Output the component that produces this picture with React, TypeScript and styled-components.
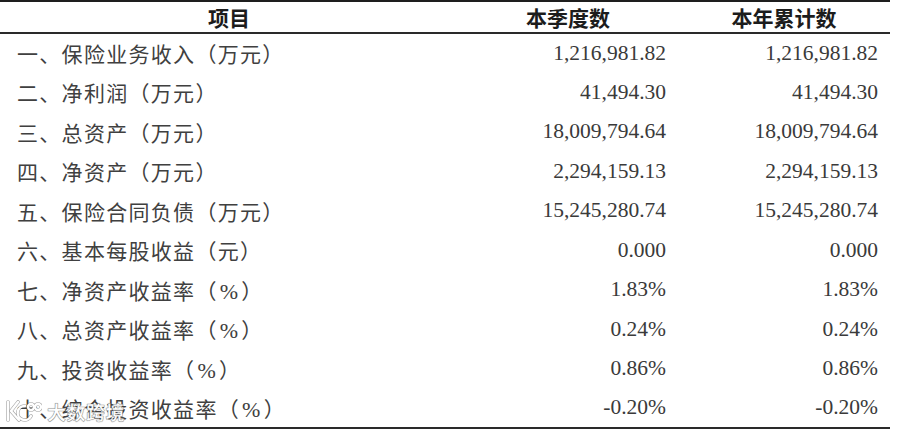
import React from "react";
import styled, { createGlobalStyle } from "styled-components";

const GlobalStyle = createGlobalStyle`
  html, body {
    margin: 0;
    padding: 0;
    background: #ffffff;
  }
`;

type Row = {
  label: string;
  quarter: string;
  year: string;
};

const rows: Row[] = [
  { label: "一、保险业务收入（万元）", quarter: "1,216,981.82", year: "1,216,981.82" },
  { label: "二、净利润（万元）", quarter: "41,494.30", year: "41,494.30" },
  { label: "三、总资产（万元）", quarter: "18,009,794.64", year: "18,009,794.64" },
  { label: "四、净资产（万元）", quarter: "2,294,159.13", year: "2,294,159.13" },
  { label: "五、保险合同负债（万元）", quarter: "15,245,280.74", year: "15,245,280.74" },
  { label: "六、基本每股收益（元）", quarter: "0.000", year: "0.000" },
  { label: "七、净资产收益率（%）", quarter: "1.83%", year: "1.83%" },
  { label: "八、总资产收益率（%）", quarter: "0.24%", year: "0.24%" },
  { label: "九、投资收益率（%）", quarter: "0.86%", year: "0.86%" },
  { label: "十、综合投资收益率（%）", quarter: "-0.20%", year: "-0.20%" },
];

const Page = styled.div`
  position: relative;
  width: 900px;
  height: 440px;
  overflow: hidden;
  background: #ffffff;
`;

const Table = styled.table`
  width: 890px;
  border-collapse: collapse;
  table-layout: fixed;
  border-top: 2px solid #1e1e1e;
  border-bottom: 2px solid #2a2a2a;
`;

const HeadRow = styled.tr`
  height: 32px;
  border-bottom: 2px solid #2a2a2a;
`;

const HeadCell = styled.th<{ $width: number }>`
  width: ${(p) => p.$width}px;
  padding: 0;
  text-align: center;
  vertical-align: middle;
  font-family: "Noto Sans CJK SC", sans-serif;
  font-weight: 700;
  font-size: 21px;
  line-height: 30px;
  color: #1c1c1c;
`;

const BodyRow = styled.tr`
  height: 39.5px;
`;

const LabelCell = styled.td`
  padding: 0 0 0 17px;
  vertical-align: middle;
  font-family: "Liberation Serif", "Noto Sans CJK SC", serif;
  font-size: 21px;
  color: #404040;
  white-space: nowrap;
  letter-spacing: 1.3px;
`;

const Percent = styled.span`
  font-family: "Liberation Serif", serif;
  font-size: 22px;
  padding: 0 2px;
`;

const NumberCell = styled.td`
  padding: 0 12px 0 0;
  text-align: right;
  vertical-align: middle;
  font-family: "Liberation Serif", "Times New Roman", serif;
  font-size: 21.5px;
  color: #3a3a3a;
  white-space: nowrap;
`;

const Watermark = styled.div`
  position: absolute;
  left: 4px;
  top: 396px;
  display: flex;
  align-items: center;
  gap: 5px;
`;

const WatermarkText = styled.span`
  font-family: "Noto Sans CJK SC", sans-serif;
  font-size: 19px;
  font-weight: 700;
  color: #ffffff;
  letter-spacing: 0.5px;
  -webkit-text-stroke: 0.5px rgba(90, 90, 90, 0.55);
  text-shadow: 0 0 1px rgba(70, 70, 70, 0.6);
`;

const Logo = () => (
  <svg width="38" height="30" viewBox="0 0 38 30" fill="none">
    <g stroke="rgba(90,90,90,0.55)" strokeWidth="3.6" strokeLinecap="round">
      <path d="M4 6 L4 24" />
      <path d="M14 6 L7 15 L15 24" />
      <path d="M21 10 A7 7 0 1 0 27 20" />
      <circle cx="27" cy="11" r="3" />
      <circle cx="34" cy="11" r="3" />
    </g>
    <g stroke="#ffffff" strokeWidth="2.4" strokeLinecap="round">
      <path d="M4 6 L4 24" />
      <path d="M14 6 L7 15 L15 24" />
      <path d="M21 10 A7 7 0 1 0 27 20" />
      <circle cx="27" cy="11" r="3" />
      <circle cx="34" cy="11" r="3" />
    </g>
  </svg>
);

function renderLabel(label: string) {
  const parts = label.split("%");
  if (parts.length === 1) return label;
  return (
    <>
      {parts[0]}
      <Percent>%</Percent>
      {parts[1]}
    </>
  );
}

export default function App() {
  return (
    <Page>
      <GlobalStyle />
      <Table>
        <thead>
          <HeadRow>
            <HeadCell $width={458}>项目</HeadCell>
            <HeadCell $width={220}>本季度数</HeadCell>
            <HeadCell $width={212}>本年累计数</HeadCell>
          </HeadRow>
        </thead>
        <tbody>
          {rows.map((r) => (
            <BodyRow key={r.label}>
              <LabelCell>{renderLabel(r.label)}</LabelCell>
              <NumberCell>{r.quarter}</NumberCell>
              <NumberCell>{r.year}</NumberCell>
            </BodyRow>
          ))}
        </tbody>
      </Table>
      <Watermark>
        <Logo />
        <WatermarkText>大数跨境</WatermarkText>
      </Watermark>
    </Page>
  );
}
